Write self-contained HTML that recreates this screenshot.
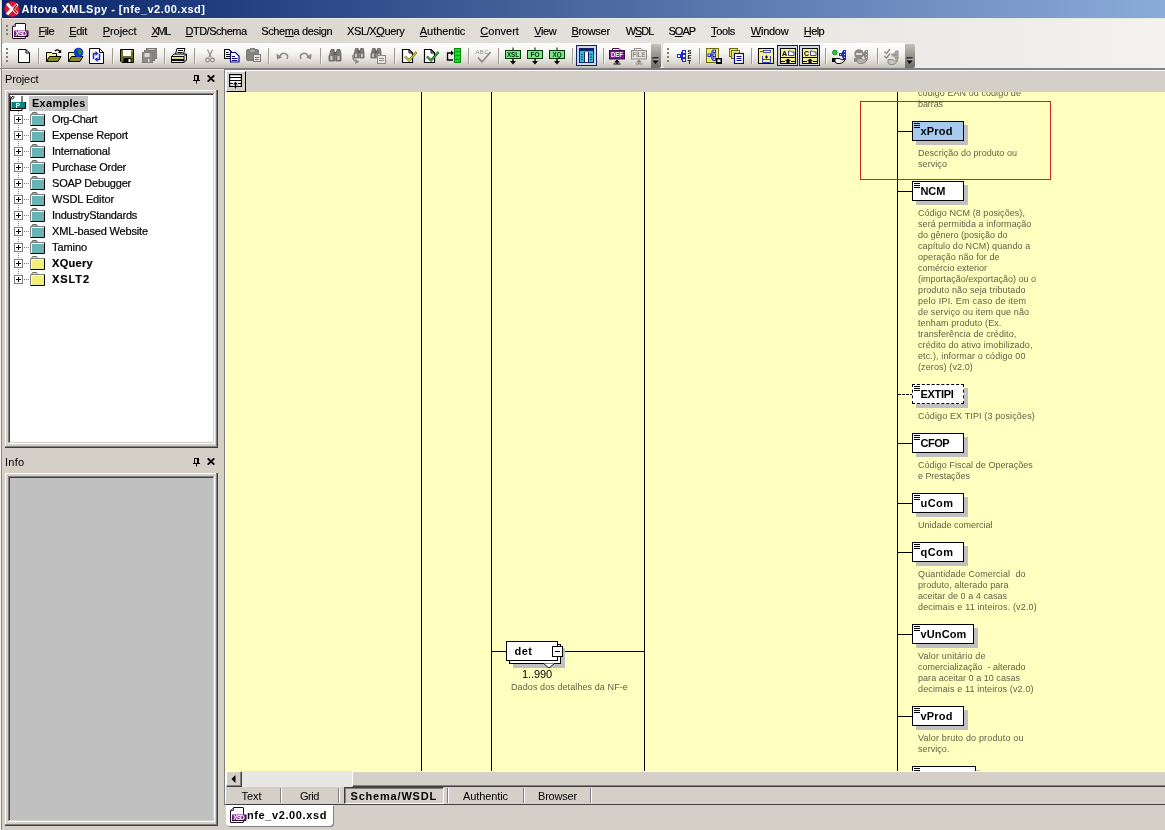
<!DOCTYPE html>
<html>
<head>
<meta charset="utf-8">
<title>Altova XMLSpy - [nfe_v2.00.xsd]</title>
<style>
html,body{margin:0;padding:0;}
body{will-change:transform;width:1165px;height:830px;overflow:hidden;background:#d4d0c8;position:relative;
 font-family:"Liberation Sans",sans-serif;font-size:11px;color:#000;}
div,span,i,b,svg{position:absolute;}
u{text-decoration:underline;}
#dock{left:0;top:18px;width:1165px;height:51px;background:linear-gradient(to right,#d4d0c8 0%,#f3f2ef 100%);}
#title{left:2px;top:0;width:1163px;height:18px;
 background:linear-gradient(to right,#0a246a 0%,#8aacd8 100%);}
#title .t{left:19.5px;top:3px;color:#fff;font-weight:bold;font-size:11px;line-height:13px;white-space:nowrap;}
.m{-webkit-text-stroke:0.15px #000;top:25px;line-height:13px;white-space:nowrap;font-size:11px;}
.tb{top:43px;height:25px;border-radius:3px 0 0 3px;background:linear-gradient(to bottom,#fdfdfc 0%,#f7f6f4 35%,#e4e1db 68%,#d2cec5 88%,#c2beb4 100%);}
.chev{top:44px;height:24px;width:10px;border-radius:0 2px 2px 0;background:linear-gradient(to bottom,#c4c1b9 0%,#96938d 50%,#6e6c68 100%);}
.sep{top:48px;width:1px;height:16px;background:#9d9a92;box-shadow:1px 0 0 #f4f3f0;}
.grip{width:2px;background:repeating-linear-gradient(to bottom,#807e78 0,#807e78 2px,transparent 2px,transparent 4px);}
.ph{left:5px;line-height:13px;white-space:nowrap;}
.tr{left:0;height:16px;width:200px;}
.tr .pm{left:5px;top:3px;width:9px;height:9px;box-sizing:border-box;border:1px solid #808080;background:#fff;}
.tr .pm:before{content:"";position:absolute;left:1px;top:3px;width:5px;height:1px;background:#000;}
.tr .pm:after{content:"";position:absolute;left:3px;top:1px;width:1px;height:5px;background:#000;}
.tr .dots{left:15px;top:7px;width:6px;height:1px;background:repeating-linear-gradient(to right,#808080 0,#808080 1px,transparent 1px,transparent 2px);}
.tr .tx{-webkit-text-stroke:0.2px #000;left:43px;top:1px;line-height:13px;white-space:nowrap;}
#diagram{left:226px;top:92px;width:939px;height:679px;background:#ffffc0;overflow:hidden;}
.vl{top:0;width:1px;height:679px;background:#000;}
.hl{height:1px;background:#000;}
.el{box-sizing:border-box;height:20px;border:1px solid #000;background:#fff;
 box-shadow:4px 4px 0 #c0c0c0;}
.el b{left:7.5px;top:3px;font-weight:bold;font-size:11px;line-height:13px;white-space:nowrap;}
.el:before{content:"";position:absolute;left:1px;top:1px;width:6px;height:1px;background:#000;box-shadow:0 2px 0 #000,0 4px 0 #000;}
.el.opt{border:1px dashed #000;}
.ann{color:#626248;font-size:9px;line-height:11px;white-space:pre;}
.tab{top:789.5px;line-height:13px;white-space:nowrap;font-size:11px;}
.tsep{top:788px;width:1px;height:15px;background:#808080;box-shadow:1px 0 0 #fff;}
</style>
</head>
<body>
<div id="title"><svg style="left:2px;top:1px" width="16" height="16" viewBox="0 0 16 16"><circle cx="8" cy="8" r="7.7" fill="#dc1432"/><path d="M12.8 4 L8.8 8 L12.8 12" stroke="#fff" stroke-width="2.8" fill="none" stroke-linecap="round" stroke-linejoin="round"/><path d="M12.6 4.3 L9.2 8 L12.6 11.7" stroke="#8c0a14" stroke-width="1.3" fill="none" stroke-linecap="round" stroke-linejoin="round"/><path d="M3.8 3.5 L8 8 L3.8 12.5" stroke="#fff" stroke-width="3" fill="none" stroke-linecap="round" stroke-linejoin="round"/></svg><span class="t" style="letter-spacing:0.47px">Altova XMLSpy - [nfe_v2.00.xsd]</span></div>
<div id="dock"></div><div style="left:2px;top:18px;width:1163px;height:1px;background:#ebe9e4"></div>
<div style="left:0;top:0;width:1px;height:830px;background:#f6f5f0"></div><div style="left:1px;top:18px;width:1px;height:812px;background:#8c8984"></div>
<div class="grip" style="left:6px;top:25px;height:10px"></div>
<svg style="left:12px;top:23px" width="17" height="17" viewBox="0 0 17 17"><path d="M0.5 3.5 L3.5 0.5 H13 Q13.5 0.5 13.5 1 V15 Q13.5 15.5 13 15.5 H1 Q0.5 15.5 0.5 15 Z" fill="#fff" stroke="#1e0a1e" stroke-width="1"/><path d="M0.5 3.5 H3.5 V0.5" fill="#c8b4d2" stroke="#1e0a1e" stroke-width="0.8"/><rect x="2" y="7.5" width="14" height="6" fill="#7a1e82"/><path d="M16 7.5 V13.5 H2" fill="none" stroke="#1e0a1e"/><text x="9" y="12.6" font-family="Liberation Sans,sans-serif" font-size="6.5" font-weight="bold" fill="#fff" text-anchor="middle" textLength="11.5">XSD</text></svg>
<span class="m" style="left:38.6px;letter-spacing:-0.58px"><u>F</u>ile</span><span class="m" style="left:69.2px;letter-spacing:-0.27px"><u>E</u>dit</span><span class="m" style="left:102.8px;letter-spacing:-0.09px"><u>P</u>roject</span><span class="m" style="left:151.4px;letter-spacing:-1.41px"><u>X</u>ML</span><span class="m" style="left:185.5px;letter-spacing:-0.50px"><u>D</u>TD/Schema</span><span class="m" style="left:261.2px;letter-spacing:-0.37px">Sche<u>m</u>a design</span><span class="m" style="left:347.0px;letter-spacing:-0.38px">XSL/X<u>Q</u>uery</span><span class="m" style="left:419.8px;letter-spacing:-0.04px"><u>A</u>uthentic</span><span class="m" style="left:480.3px;letter-spacing:0.01px"><u>C</u>onvert</span><span class="m" style="left:534.3px;letter-spacing:-0.41px"><u>V</u>iew</span><span class="m" style="left:571.4px;letter-spacing:-0.28px"><u>B</u>rowser</span><span class="m" style="left:625.8px;letter-spacing:-1.10px">W<u>S</u>DL</span><span class="m" style="left:668.4px;letter-spacing:-0.92px">S<u>O</u>AP</span><span class="m" style="left:711.0px;letter-spacing:-0.34px"><u>T</u>ools</span><span class="m" style="left:750.8px;letter-spacing:-0.25px"><u>W</u>indow</span><span class="m" style="left:803.8px;letter-spacing:-0.61px"><u>H</u>elp</span>
<div class="tb" style="left:2px;width:650px"></div><div class="chev" style="left:651px"></div><svg style="left:652px;top:57px" width="7" height="8" viewBox="0 0 7 8"><path d="M0.5 1 H6.5" stroke="#000" stroke-width="1.3"/><path d="M0.5 3.5 H6.5 L3.5 7 Z" fill="#000"/><path d="M1.5 2 H7.5" stroke="#fff" stroke-width="0.7" opacity="0.7"/></svg>
<div class="tb" style="left:663px;width:243px"></div><div class="chev" style="left:905px"></div><svg style="left:906px;top:57px" width="7" height="8" viewBox="0 0 7 8"><path d="M0.5 1 H6.5" stroke="#000" stroke-width="1.3"/><path d="M0.5 3.5 H6.5 L3.5 7 Z" fill="#000"/><path d="M1.5 2 H7.5" stroke="#fff" stroke-width="0.7" opacity="0.7"/></svg>
<div class="grip" style="left:6px;top:48px;height:14px"></div><div class="grip" style="left:667px;top:48px;height:14px"></div>
<div class="sep" style="left:38px"></div><div class="sep" style="left:112px"></div><div class="sep" style="left:164px"></div><div class="sep" style="left:194px"></div><div class="sep" style="left:268px"></div><div class="sep" style="left:320px"></div><div class="sep" style="left:394px"></div><div class="sep" style="left:468px"></div><div class="sep" style="left:498px"></div><div class="sep" style="left:572px"></div><div class="sep" style="left:603px"></div><div class="sep" style="left:699px"></div><div class="sep" style="left:751px"></div><div class="sep" style="left:825px"></div><div class="sep" style="left:877px"></div>
<svg style="left:18px;top:49px" width="12" height="14" viewBox="0 0 12 14"><path d="M0.5 0.5 H8 L11.5 4 V13.5 H0.5 Z" fill="#fff" stroke="#000"/><path d="M8 0.5 V4 H11.5" fill="none" stroke="#000"/></svg><svg style="left:46px;top:47px" width="16" height="16" viewBox="0 0 16 16"><path d="M0.5 14.5 V5.5 H5.5 L6.5 6.5 H10.5 V9.5" fill="#f6f296" stroke="#000"/><path d="M0.5 14.5 L3.5 9.5 H15 L12 14.5 Z" fill="#8c8c1e" stroke="#000"/><path d="M9 4 Q11.5 1.5 14 4.5" fill="none" stroke="#000" stroke-width="1.2"/><path d="M15.2 2.5 V6 H11.8 Z" fill="#000"/></svg><svg style="left:68px;top:47px" width="16" height="16" viewBox="0 0 16 16"><path d="M0.5 14.5 V5.5 H5.5 L6.5 6.5 H10.5 V9.5" fill="#f6f296" stroke="#000"/><path d="M0.5 14.5 L3.5 9.5 H15 L12 14.5 Z" fill="#8c8c1e" stroke="#000"/><circle cx="10.5" cy="5.5" r="4.8" fill="#1436c8"/><path d="M8.5 2 q2 0.5 1.5 2.5 t1.5 3.5 q2.5-1 2.5-4 q-1.5-1-2.5-2 z M6.5 5 q1 1 0.5 3 q-1-1-0.5-3z" fill="#1e8c3c"/></svg><svg style="left:89px;top:48px" width="15" height="16" viewBox="0 0 15 16"><path d="M0.5 0.5 H10.5 L14.5 4.5 V15.5 H0.5 Z" fill="#fff" stroke="#000"/><path d="M10.5 0.5 V4.5 H14.5" fill="none" stroke="#000"/><path d="M7 5.5 H4.5 V11" fill="none" stroke="#1e28d2" stroke-width="1.6"/><path d="M6.5 3 L9.5 5.5 L6.5 8 Z" fill="#1e28d2"/><path d="M8 11.5 H10.5 V6" fill="none" stroke="#1e28d2" stroke-width="1.6"/><path d="M8.5 9 L5.5 11.5 L8.5 14 Z" fill="#1e28d2"/></svg><svg style="left:120px;top:49px" width="14" height="14" viewBox="0 0 14 14"><path d="M0.5 0.5 H13.5 V13.5 H2 L0.5 12 Z" fill="#6e6e1e" stroke="#000"/><rect x="3" y="1" width="8" height="6" fill="#fff"/><rect x="11.5" y="1.5" width="1" height="1" fill="#fff"/><rect x="3.5" y="9" width="8" height="4.5" fill="#000"/><rect x="8.5" y="10" width="2" height="3" fill="#fff"/></svg><svg style="left:142px;top:48px" width="16" height="15" viewBox="0 0 16 15"><rect x="4.5" y="0.5" width="10" height="10" fill="#8e8c88" stroke="#7c7a76"/><rect x="6.5" y="1" width="6" height="3" fill="#c8c6c2"/><rect x="2.5" y="2.5" width="10" height="10" fill="#8e8c88" stroke="#7c7a76"/><rect x="0.5" y="4.5" width="10" height="10" fill="#8e8c88" stroke="#7c7a76"/><rect x="2.5" y="5" width="5" height="4" fill="#dcdad6"/><rect x="6" y="11" width="1.5" height="3" fill="#dcdad6"/></svg><svg style="left:171px;top:48px" width="17" height="16" viewBox="0 0 17 16"><path d="M4.5 6 L6 0.5 H14 L12.5 6" fill="#fff" stroke="#000"/><path d="M7 2.5 H12 M6.5 4.5 H11.5" stroke="#000"/><path d="M0.5 8.5 L3 6 H15.5 V12 L13 14.5 H0.5 Z" fill="#e8e6e0" stroke="#000"/><path d="M0.5 8.5 H13 V14.5 M13 8.5 L15.5 6" fill="none" stroke="#000"/><rect x="1" y="11" width="12" height="2" fill="#000"/><rect x="2" y="9.5" width="9" height="1.5" fill="#d8d850"/></svg>
<svg style="left:205px;top:49px" width="10" height="14" viewBox="0 0 10 14"><path d="M2.5 0.5 L6.3 8.5 M7.5 0.5 L3.7 8.5" stroke="#8c8a84" stroke-width="1.100" fill="none"/><circle cx="2.5" cy="11" r="1.9" fill="none" stroke="#8c8a84" stroke-width="1.100"/><circle cx="7.5" cy="11" r="1.9" fill="none" stroke="#8c8a84" stroke-width="1.100"/></svg><svg style="left:224px;top:49px" width="16" height="14" viewBox="0 0 16 14"><path d="M0.5 0.5 H5 L7.5 3 V9.5 H0.5 Z" fill="#fff" stroke="#000" stroke-width="1.2"/><path d="M2 3.5 H4.5 M2 5.5 H6 M2 7.5 H6" stroke="#000"/><path d="M6.5 3.5 H11.5 L15 7 V13 H6.5 Z" fill="#fff" stroke="#0a0a82" stroke-width="1.2"/><path d="M8 7.5 H11 M8 9.5 H13.5 M8 11.5 H13.5" stroke="#0a0a82"/></svg><svg style="left:246px;top:48px" width="15" height="14" viewBox="0 0 15 14"><rect x="0.5" y="1.5" width="12" height="11" rx="1.5" fill="#868480" stroke="#7c7a76"/><rect x="4" y="0" width="5" height="3" fill="#868480"/><rect x="4.5" y="2.5" width="4" height="1" fill="#dcdad6"/><rect x="7.5" y="6.5" width="7" height="7" fill="#e4e2de" stroke="#7c7a76"/><path d="M9 9.5 H13 M9 11.5 H13" stroke="#7c7a76"/></svg><svg style="left:276px;top:51px" width="14" height="10" viewBox="0 0 14 10"><g><path d="M3.5 6 Q5.5 1.5 9 2.5 Q13 4 11 8" fill="none" stroke="#8c8a84" stroke-width="1.5"/><path d="M0.5 2.5 L6 6.5 L1 8.5 Z" fill="#8c8a84"/></g></svg><svg style="left:298px;top:51px" width="14" height="10" viewBox="0 0 14 10"><g transform="translate(14,0) scale(-1,1)"><path d="M3.5 6 Q5.5 1.5 9 2.5 Q13 4 11 8" fill="none" stroke="#8c8a84" stroke-width="1.5"/><path d="M0.5 2.5 L6 6.5 L1 8.5 Z" fill="#8c8a84"/></g></svg><svg style="left:328px;top:48px" width="16" height="17" viewBox="0 0 16 17"><path d="M2 6 L3 1.5 H6 L7 6 V13 H1 V8 Z M8 6 L9 1.5 H12 L13 6 V13 H8 Z" fill="#7e7c76" stroke="#5e5c58" stroke-width="0.8"/><rect x="5.5" y="4" width="3" height="3" fill="#5e5c58"/><rect x="2.5" y="8" width="2" height="4" fill="#d4d0c8"/><rect x="9.5" y="8" width="2" height="4" fill="#d4d0c8"/></svg><svg style="left:350px;top:48px" width="16" height="17" viewBox="0 0 16 17"><g transform="translate(3,-1) scale(0.85)"><path d="M2 6 L3 1.5 H6 L7 6 V13 H1 V8 Z M8 6 L9 1.5 H12 L13 6 V13 H8 Z" fill="#7e7c76" stroke="#5e5c58" stroke-width="0.8"/><rect x="5.5" y="4" width="3" height="3" fill="#5e5c58"/><rect x="2.5" y="8" width="2" height="4" fill="#d4d0c8"/><rect x="9.5" y="8" width="2" height="4" fill="#d4d0c8"/></g><path d="M3 7 Q2 13 7 13.5" fill="none" stroke="#8c8a84" stroke-width="1.5"/><path d="M5.5 11 L9.5 14 L5 16 Z" fill="#8c8a84"/></svg><svg style="left:370px;top:48px" width="16" height="17" viewBox="0 0 16 17"><g transform="translate(0,-1) scale(0.85)"><path d="M2 6 L3 1.5 H6 L7 6 V13 H1 V8 Z M8 6 L9 1.5 H12 L13 6 V13 H8 Z" fill="#7e7c76" stroke="#5e5c58" stroke-width="0.8"/><rect x="5.5" y="4" width="3" height="3" fill="#5e5c58"/><rect x="2.5" y="8" width="2" height="4" fill="#d4d0c8"/><rect x="9.5" y="8" width="2" height="4" fill="#d4d0c8"/></g><rect x="7.5" y="7.5" width="8" height="8" fill="#e8e6e2" stroke="#8c8a84"/><path d="M9 10.5 H14 M9 12.5 H14" stroke="#8c8a84"/></svg>
<svg style="left:401px;top:49px" width="17" height="14" viewBox="0 0 17 14"><path d="M1.5 0.5 H8 L11.5 4 V13.5 H1.5 Z" fill="#fff" stroke="#000" stroke-width="1.2"/><path d="M8 0.5 V4 H11.5" fill="none" stroke="#000"/><path d="M4 7.5 L8 11.5 L15.5 3" fill="none" stroke="#28280a" stroke-width="2.2"/><path d="M4 7.5 L8 11.5 L15.5 3" fill="none" stroke="#e6dc28" stroke-width="1.2"/></svg><svg style="left:423px;top:49px" width="17" height="14" viewBox="0 0 17 14"><path d="M1.5 0.5 H8 L11.5 4 V13.5 H1.5 Z" fill="#fff" stroke="#000" stroke-width="1.2"/><path d="M8 0.5 V4 H11.5" fill="none" stroke="#000"/><path d="M4 7.5 L8 11.5 L15.5 3" fill="none" stroke="#28280a" stroke-width="2.2"/><path d="M4 7.5 L8 11.5 L15.5 3" fill="none" stroke="#28b43c" stroke-width="1.2"/></svg><svg style="left:446px;top:48px" width="16" height="15" viewBox="0 0 16 15"><rect x="8.5" y="0.5" width="6" height="14" fill="#14dc28" stroke="#0a8c14"/><path d="M9.5 3.5 H13.5 M9.5 7.5 H13.5 M9.5 11.5 H13.5" stroke="#0a8c14"/><path d="M6 5 H1.5 V12 H7" fill="none" stroke="#000" stroke-width="1.3"/><path d="M5 2.5 L8 5 L5 7.5 Z" fill="#000"/></svg><svg style="left:475px;top:48px" width="17" height="16" viewBox="0 0 17 16"><text x="0.5" y="5.5" font-family="Liberation Sans,sans-serif" font-size="6" fill="#8c8a84" textLength="13">ABC</text><path d="M3 9.5 L7 14 L15.5 4" fill="none" stroke="#8c8a84" stroke-width="1.7"/></svg><svg style="left:505px;top:46px" width="16" height="20" viewBox="0 0 16 20"><path d="M8 1.5 V4" stroke="#000"/><rect x="0.5" y="4.5" width="15" height="8" fill="#78e68c" stroke="#003c00"/><text x="8" y="11.3" font-family="Liberation Sans,sans-serif" font-size="7.5" font-weight="bold" fill="#002800" text-anchor="middle" textLength="12" lengthAdjust="spacingAndGlyphs">XSL</text><path d="M8 13 V16" stroke="#000" stroke-width="1.4"/><path d="M5 15 H11 L8 18.5 Z" fill="#000"/></svg><svg style="left:527px;top:46px" width="16" height="20" viewBox="0 0 16 20"><path d="M8 1.5 V4" stroke="#000"/><rect x="0.5" y="4.5" width="15" height="8" fill="#78e68c" stroke="#003c00"/><text x="8" y="11.3" font-family="Liberation Sans,sans-serif" font-size="7.5" font-weight="bold" fill="#002800" text-anchor="middle" textLength="9" lengthAdjust="spacingAndGlyphs">FO</text><path d="M8 13 V16" stroke="#000" stroke-width="1.4"/><path d="M5 15 H11 L8 18.5 Z" fill="#000"/></svg><svg style="left:549px;top:46px" width="16" height="20" viewBox="0 0 16 20"><path d="M8 1.5 V4" stroke="#000"/><rect x="0.5" y="4.5" width="15" height="8" fill="#78e68c" stroke="#003c00"/><text x="8" y="11.3" font-family="Liberation Sans,sans-serif" font-size="7.5" font-weight="bold" fill="#002800" text-anchor="middle" textLength="9" lengthAdjust="spacingAndGlyphs">XQ</text><path d="M8 13 V16" stroke="#000" stroke-width="1.4"/><path d="M5 15 H11 L8 18.5 Z" fill="#000"/></svg>
<div style="left:576px;top:45px;width:21px;height:21px;box-sizing:border-box;border:1px solid #0a246a;background:#d2d7e8"></div><svg style="left:579px;top:48px" width="15" height="15" viewBox="0 0 15 15"><rect x="0.5" y="0.5" width="14" height="14" fill="#fff" stroke="#0a246a"/><rect x="1" y="1" width="13" height="2.5" fill="#0a246a"/><rect x="1" y="4" width="4" height="10" fill="#32bed2"/><rect x="10" y="4" width="4" height="10" fill="#32bed2"/><path d="M5.5 4 V14 M9.5 4 V14" stroke="#0a246a"/><path d="M2 6.5 H4 M2 9 H4 M2 11.5 H4 M11 6.5 H13 M11 9 H13 M11 11.5 H13" stroke="#0a246a" stroke-width="0.8"/></svg><svg style="left:609px;top:46px" width="17" height="20" viewBox="0 0 17 20"><path d="M3.5 5 V2.5 H10 L12.5 5" fill="#fff" stroke="#3c0a46"/><rect x="0.5" y="4.5" width="15" height="8.5" fill="#78148c" stroke="#3c0a46"/><text x="8" y="11.3" font-family="Liberation Sans,sans-serif" font-size="7.5" font-weight="bold" fill="#fff" text-anchor="middle" textLength="12" lengthAdjust="spacingAndGlyphs">DEF</text><path d="M8 14 V18" stroke="#000" stroke-width="1.3"/><path d="M5 16.5 L8 13.5 L11 16.5 Z" fill="#000"/><path d="M4.5 18 H11.5" stroke="#000"/></svg><svg style="left:631px;top:46px" width="17" height="20" viewBox="0 0 17 20"><path d="M3.5 5 V2.5 H10 L12.5 5" fill="#fff" stroke="#8c8a84"/><rect x="0.5" y="4.5" width="15" height="8.5" fill="#e4e2de" stroke="#8c8a84"/><text x="8" y="11.3" font-family="Liberation Sans,sans-serif" font-size="7.5" font-weight="bold" fill="#8c8a84" text-anchor="middle" textLength="13" lengthAdjust="spacingAndGlyphs">FILE</text><path d="M8 14 V18" stroke="#8c8a84" stroke-width="1.3"/><path d="M5 16.5 L8 13.5 L11 16.5 Z" fill="#8c8a84"/><path d="M4.5 18 H11.5" stroke="#8c8a84"/></svg>
<svg style="left:677px;top:48px" width="16" height="17" viewBox="0 0 16 17"><g fill="#fff" stroke="#1e28d2"><rect x="0.5" y="6.5" width="3" height="3"/><rect x="5.5" y="2.5" width="3" height="3"/><rect x="5.5" y="6.5" width="3" height="3"/><rect x="5.5" y="10.5" width="3" height="3"/></g><path d="M3.5 8 H5.5 M4.5 4 V12 M4.5 4 H5.5 M4.5 12 H5.5" stroke="#1e28d2" fill="none"/><text x="10.5" y="5.5" font-family="Liberation Sans,sans-serif" font-size="6" font-weight="bold">S</text><text x="10.5" y="10.8" font-family="Liberation Sans,sans-serif" font-size="6" font-weight="bold">E</text><text x="10.5" y="16.2" font-family="Liberation Sans,sans-serif" font-size="6" font-weight="bold">T</text></svg><svg style="left:706px;top:48px" width="17" height="17" viewBox="0 0 17 17"><rect x="0.5" y="0.5" width="12" height="14" fill="#f0ec78" stroke="#6e6e14"/><g fill="#fff" stroke="#1e28d2"><rect x="2" y="6" width="2.5" height="2.5"/><rect x="7" y="2" width="2.5" height="2.5"/><rect x="7" y="6" width="2.5" height="2.5"/><rect x="7" y="10" width="2.5" height="2.5"/></g><path d="M4.5 7.2 H7 M5.8 3.2 V11.2 M5.8 3.2 H7 M5.8 11.2 H7" stroke="#1e28d2" fill="none"/><rect x="10" y="10" width="6" height="6" fill="#000"/><rect x="11.5" y="11.5" width="3" height="2.5" fill="#fff"/></svg><svg style="left:729px;top:48px" width="15" height="16" viewBox="0 0 15 16"><rect x="0.5" y="0.5" width="8" height="8" fill="#e6e26e" stroke="#6e6e14"/><rect x="2.5" y="2.5" width="8" height="8" fill="#e6e26e" stroke="#6e6e14"/><rect x="5.5" y="5.5" width="9" height="10" fill="#fff" stroke="#0a0a82" stroke-width="1.2"/><path d="M7.5 8.5 H12.5 M7.5 10.5 H12.5 M7.5 12.5 H12.5" stroke="#0a0a82"/></svg><svg style="left:758px;top:48px" width="16" height="16" viewBox="0 0 16 16"><rect x="0.5" y="0.5" width="15" height="15" fill="#f6f28c" stroke="#000"/><rect x="5.5" y="2.5" width="7" height="2" fill="#fff" stroke="#1e28d2" stroke-width="0.8"/><path d="M2 3.5 H5.5" stroke="#1e28d2" stroke-width="0.8"/><path d="M4.5 8 V14.5 H12.5 V8 M4.5 11.5 H12.5" stroke="#1e28d2" stroke-width="0.9" fill="none"/><path d="M7 9 H10 M8.5 7.5 V10.5" stroke="#000"/></svg><div style="left:777px;top:45px;width:21px;height:21px;box-sizing:border-box;border:1px solid #0a246a;background:#d2d7e8"></div><svg style="left:780px;top:48px" width="16" height="16" viewBox="0 0 16 16"><rect x="0.5" y="0.5" width="15" height="15" fill="#f6f28c" stroke="#000"/><text x="2" y="7.5" font-family="Liberation Sans,sans-serif" font-size="7" font-weight="bold">A</text><path d="M8.5 3 H10.5 L11.5 4 H14 V7.5 H8.5 Z" fill="#fff" stroke="#1e28d2" stroke-width="0.9"/><path d="M1 9.5 H15 M1 13.5 H5 M11 13.5 H15" stroke="#000"/><path d="M8 10.5 L11 13 H9.5 V15 H6.5 V13 H5 Z" fill="#000"/></svg><div style="left:799px;top:45px;width:21px;height:21px;box-sizing:border-box;border:1px solid #0a246a;background:#d2d7e8"></div><svg style="left:802px;top:48px" width="16" height="16" viewBox="0 0 16 16"><rect x="0.5" y="0.5" width="15" height="15" fill="#f6f28c" stroke="#000"/><text x="2" y="7.5" font-family="Liberation Sans,sans-serif" font-size="7" font-weight="bold">C</text><path d="M8.5 3 H10.5 L11.5 4 H14 V7.5 H8.5 Z" fill="#fff" stroke="#1e28d2" stroke-width="0.9"/><path d="M1 9.5 H15 M1 13.5 H5 M11 13.5 H15" stroke="#000"/><path d="M8 10.5 L11 13 H9.5 V15 H6.5 V13 H5 Z" fill="#000"/></svg><svg style="left:832px;top:49px" width="15" height="15" viewBox="0 0 15 15"><g fill="#fff" stroke="#1e28d2"><rect x="7.5" y="4.5" width="2" height="2"/><rect x="11.5" y="1.5" width="2" height="2"/><rect x="11.5" y="4.5" width="2" height="2"/><rect x="11.5" y="7.5" width="2" height="2"/></g><path d="M9.5 5.5 H11.5 M10.5 2.5 V8.5 M10.5 2.5 H11.5 M10.5 8.5 H11.5" stroke="#1e28d2" fill="none"/><path d="M3 9.5 H7 Q8.5 9.5 9.5 11 L13.5 10 Q11.5 14.5 8 14.5 H5 L3 13 Z" fill="#fff" stroke="#000"/><rect x="0" y="9" width="3" height="4" fill="#000"/><circle cx="2.8" cy="3.5" r="2.3" fill="#1ed23c" stroke="#0a6e14" stroke-width="0.8"/></svg><svg style="left:854px;top:49px" width="15" height="15" viewBox="0 0 15 15"><g fill="#fff" stroke="#8c8a84"><rect x="7.5" y="4.5" width="2" height="2"/><rect x="11.5" y="1.5" width="2" height="2"/><rect x="11.5" y="4.5" width="2" height="2"/><rect x="11.5" y="7.5" width="2" height="2"/></g><path d="M9.5 5.5 H11.5 M10.5 2.5 V8.5 M10.5 2.5 H11.5 M10.5 8.5 H11.5" stroke="#8c8a84" fill="none"/><path d="M3 9.5 H7 Q8.5 9.5 9.5 11 L13.5 10 Q11.5 14.5 8 14.5 H5 L3 13 Z" fill="#b4b2ac" stroke="#8c8a84"/><rect x="0" y="9" width="3" height="4" fill="#8c8a84"/><circle cx="5" cy="5" r="4.8" fill="#8c8a84"/><rect x="2" y="4" width="6" height="2" fill="#dcdad6"/></svg><svg style="left:884px;top:48px" width="15" height="17" viewBox="0 0 15 17"><path d="M0.5 3.5 L2.5 5.5 L6 1 M0.5 8 L2.5 10 L6 5.5" fill="none" stroke="#8c8a84" stroke-width="1.4"/><g fill="#e4e2de" stroke="#8c8a84"><rect x="8" y="6" width="2" height="2"/><rect x="12" y="3" width="2" height="2"/><rect x="12" y="6" width="2" height="2"/><rect x="12" y="9" width="2" height="2"/></g><path d="M10 7 H12 M11 4 V10 M11 4 H12 M11 10 H12" stroke="#8c8a84" fill="none"/><path d="M4 11.5 H8 Q9.5 11.5 10.5 13 L14 12 Q12 16.5 9 16.5 H6 L4 15 Z" fill="#c4c2bc" stroke="#8c8a84"/></svg>
<div style="left:0;top:68px;width:1165px;height:1px;background:#808080"></div><div style="left:2px;top:69px;width:222px;height:1px;background:#efeeea"></div>
<span class="ph" style="top:73px;letter-spacing:-0.11px">Project</span><svg style="left:193px;top:75px" width="7" height="9" viewBox="0 0 7 9"><path d="M1 0.5 H6 M1.5 0 V5 M0 5.5 H7 M3.5 6 V8.5" stroke="#000" fill="none"/><path d="M5 0 V5" stroke="#000" stroke-width="2"/></svg><svg style="left:207px;top:75px" width="8" height="7" viewBox="0 0 8 7"><path d="M0.7 0.3 L7.3 6.7 M7.3 0.3 L0.7 6.7" stroke="#000" stroke-width="1.8"/></svg>
<span class="ph" style="top:456px;letter-spacing:0.29px">Info</span><svg style="left:193px;top:458px" width="7" height="9" viewBox="0 0 7 9"><path d="M1 0.5 H6 M1.5 0 V5 M0 5.5 H7 M3.5 6 V8.5" stroke="#000" fill="none"/><path d="M5 0 V5" stroke="#000" stroke-width="2"/></svg><svg style="left:207px;top:458px" width="8" height="7" viewBox="0 0 8 7"><path d="M0.7 0.3 L7.3 6.7 M7.3 0.3 L0.7 6.7" stroke="#000" stroke-width="1.8"/></svg>
<div style="left:5px;top:90px;width:213px;height:358px;background:#404040"></div><div style="left:5px;top:90px;width:212px;height:357px;background:#808080"></div><div style="left:5px;top:90px;width:211px;height:356px;background:#fff"></div><div style="left:6px;top:91px;width:210px;height:355px;background:#d4d0c8"></div><div style="left:8px;top:93px;width:207px;height:351px;background:#fff"></div><div style="left:8px;top:93px;width:206px;height:350px;background:#808080"></div><div style="left:9px;top:94px;width:205px;height:349px;background:#d4d0c8"></div><div style="left:9px;top:94px;width:204px;height:348px;background:#404040"></div><div style="left:10px;top:95px;width:203px;height:347px;background:#fff"></div>
<div style="left:5px;top:473px;width:213px;height:353px;background:#404040"></div><div style="left:5px;top:473px;width:212px;height:352px;background:#808080"></div><div style="left:5px;top:473px;width:211px;height:351px;background:#fff"></div><div style="left:6px;top:474px;width:210px;height:350px;background:#d4d0c8"></div><div style="left:8px;top:476px;width:207px;height:346px;background:#fff"></div><div style="left:8px;top:476px;width:206px;height:345px;background:#808080"></div><div style="left:9px;top:477px;width:205px;height:344px;background:#d4d0c8"></div><div style="left:9px;top:477px;width:204px;height:343px;background:#404040"></div><div style="left:10px;top:478px;width:203px;height:342px;background:#c0c0c0"></div>
<div id="tree" style="left:9px;top:96px;width:204px;height:347px;overflow:hidden"><svg style="left:1px;top:-1px" width="17" height="17" viewBox="0 0 17 17"><rect x="0.5" y="0.5" width="11.5" height="15" fill="#fff" stroke="#000"/><rect x="1.5" y="7" width="14" height="6.5" fill="#0a8282"/><path d="M15.5 7 V13.5 H1.5" fill="none" stroke="#000"/><text x="8" y="12.8" font-family="Liberation Sans,sans-serif" font-size="6.5" font-weight="bold" fill="#fff" text-anchor="middle">P</text><circle cx="2" cy="2" r="2" fill="#fff" stroke="#000" stroke-width="0.8"/><path d="M1 3 L3 1" stroke="#000"/></svg><div style="left:20px;top:0;width:59px;height:15px;background:#c6c6c6"></div><span style="left:23px;top:1px;line-height:13px;font-weight:bold;white-space:nowrap;letter-spacing:0.27px">Examples</span><div style="left:9px;top:15px;width:1px;height:171px;background:repeating-linear-gradient(to bottom,#808080 0,#808080 1px,transparent 1px,transparent 2px)"></div><div class="tr" style="top:16px"><div class="pm"></div><div class="dots"></div><svg style="left:21px;top:0px" width="16" height="15" viewBox="0 0 16 15"><path d="M1.5 2.5 L2.5 0.5 H6.5 L7.5 2.5" fill="#66b4b4" stroke="#6e6e6e"/><rect x="0.5" y="2.5" width="14" height="11" fill="#66b4b4"/><path d="M1.5 13 V3.5 H14" fill="none" stroke="#e6ffff"/><path d="M0.5 13.5 V2.5 H14.5" fill="none" stroke="#808080"/><path d="M14.5 2.5 V13.5 H0.5" fill="none" stroke="#000"/></svg><span class="tx" style="letter-spacing:-0.43px">Org-Chart</span></div><div class="tr" style="top:32px"><div class="pm"></div><div class="dots"></div><svg style="left:21px;top:0px" width="16" height="15" viewBox="0 0 16 15"><path d="M1.5 2.5 L2.5 0.5 H6.5 L7.5 2.5" fill="#66b4b4" stroke="#6e6e6e"/><rect x="0.5" y="2.5" width="14" height="11" fill="#66b4b4"/><path d="M1.5 13 V3.5 H14" fill="none" stroke="#e6ffff"/><path d="M0.5 13.5 V2.5 H14.5" fill="none" stroke="#808080"/><path d="M14.5 2.5 V13.5 H0.5" fill="none" stroke="#000"/></svg><span class="tx" style="letter-spacing:-0.21px">Expense Report</span></div><div class="tr" style="top:48px"><div class="pm"></div><div class="dots"></div><svg style="left:21px;top:0px" width="16" height="15" viewBox="0 0 16 15"><path d="M1.5 2.5 L2.5 0.5 H6.5 L7.5 2.5" fill="#66b4b4" stroke="#6e6e6e"/><rect x="0.5" y="2.5" width="14" height="11" fill="#66b4b4"/><path d="M1.5 13 V3.5 H14" fill="none" stroke="#e6ffff"/><path d="M0.5 13.5 V2.5 H14.5" fill="none" stroke="#808080"/><path d="M14.5 2.5 V13.5 H0.5" fill="none" stroke="#000"/></svg><span class="tx" style="letter-spacing:-0.20px">International</span></div><div class="tr" style="top:64px"><div class="pm"></div><div class="dots"></div><svg style="left:21px;top:0px" width="16" height="15" viewBox="0 0 16 15"><path d="M1.5 2.5 L2.5 0.5 H6.5 L7.5 2.5" fill="#66b4b4" stroke="#6e6e6e"/><rect x="0.5" y="2.5" width="14" height="11" fill="#66b4b4"/><path d="M1.5 13 V3.5 H14" fill="none" stroke="#e6ffff"/><path d="M0.5 13.5 V2.5 H14.5" fill="none" stroke="#808080"/><path d="M14.5 2.5 V13.5 H0.5" fill="none" stroke="#000"/></svg><span class="tx" style="letter-spacing:-0.26px">Purchase Order</span></div><div class="tr" style="top:80px"><div class="pm"></div><div class="dots"></div><svg style="left:21px;top:0px" width="16" height="15" viewBox="0 0 16 15"><path d="M1.5 2.5 L2.5 0.5 H6.5 L7.5 2.5" fill="#66b4b4" stroke="#6e6e6e"/><rect x="0.5" y="2.5" width="14" height="11" fill="#66b4b4"/><path d="M1.5 13 V3.5 H14" fill="none" stroke="#e6ffff"/><path d="M0.5 13.5 V2.5 H14.5" fill="none" stroke="#808080"/><path d="M14.5 2.5 V13.5 H0.5" fill="none" stroke="#000"/></svg><span class="tx" style="letter-spacing:-0.21px">SOAP Debugger</span></div><div class="tr" style="top:96px"><div class="pm"></div><div class="dots"></div><svg style="left:21px;top:0px" width="16" height="15" viewBox="0 0 16 15"><path d="M1.5 2.5 L2.5 0.5 H6.5 L7.5 2.5" fill="#66b4b4" stroke="#6e6e6e"/><rect x="0.5" y="2.5" width="14" height="11" fill="#66b4b4"/><path d="M1.5 13 V3.5 H14" fill="none" stroke="#e6ffff"/><path d="M0.5 13.5 V2.5 H14.5" fill="none" stroke="#808080"/><path d="M14.5 2.5 V13.5 H0.5" fill="none" stroke="#000"/></svg><span class="tx" style="letter-spacing:-0.11px">WSDL Editor</span></div><div class="tr" style="top:112px"><div class="pm"></div><div class="dots"></div><svg style="left:21px;top:0px" width="16" height="15" viewBox="0 0 16 15"><path d="M1.5 2.5 L2.5 0.5 H6.5 L7.5 2.5" fill="#66b4b4" stroke="#6e6e6e"/><rect x="0.5" y="2.5" width="14" height="11" fill="#66b4b4"/><path d="M1.5 13 V3.5 H14" fill="none" stroke="#e6ffff"/><path d="M0.5 13.5 V2.5 H14.5" fill="none" stroke="#808080"/><path d="M14.5 2.5 V13.5 H0.5" fill="none" stroke="#000"/></svg><span class="tx" style="letter-spacing:-0.25px">IndustryStandards</span></div><div class="tr" style="top:128px"><div class="pm"></div><div class="dots"></div><svg style="left:21px;top:0px" width="16" height="15" viewBox="0 0 16 15"><path d="M1.5 2.5 L2.5 0.5 H6.5 L7.5 2.5" fill="#66b4b4" stroke="#6e6e6e"/><rect x="0.5" y="2.5" width="14" height="11" fill="#66b4b4"/><path d="M1.5 13 V3.5 H14" fill="none" stroke="#e6ffff"/><path d="M0.5 13.5 V2.5 H14.5" fill="none" stroke="#808080"/><path d="M14.5 2.5 V13.5 H0.5" fill="none" stroke="#000"/></svg><span class="tx" style="letter-spacing:-0.17px">XML-based Website</span></div><div class="tr" style="top:144px"><div class="pm"></div><div class="dots"></div><svg style="left:21px;top:0px" width="16" height="15" viewBox="0 0 16 15"><path d="M1.5 2.5 L2.5 0.5 H6.5 L7.5 2.5" fill="#66b4b4" stroke="#6e6e6e"/><rect x="0.5" y="2.5" width="14" height="11" fill="#66b4b4"/><path d="M1.5 13 V3.5 H14" fill="none" stroke="#e6ffff"/><path d="M0.5 13.5 V2.5 H14.5" fill="none" stroke="#808080"/><path d="M14.5 2.5 V13.5 H0.5" fill="none" stroke="#000"/></svg><span class="tx" style="letter-spacing:-0.08px">Tamino</span></div><div class="tr" style="top:160px"><div class="pm"></div><div class="dots"></div><svg style="left:21px;top:0px" width="16" height="15" viewBox="0 0 16 15"><path d="M1.5 2.5 L2.5 0.5 H6.5 L7.5 2.5" fill="#f0f078" stroke="#6e6e6e"/><rect x="0.5" y="2.5" width="14" height="11" fill="#f0f078"/><path d="M1.5 13 V3.5 H14" fill="none" stroke="#ffffe0"/><path d="M0.5 13.5 V2.5 H14.5" fill="none" stroke="#808080"/><path d="M14.5 2.5 V13.5 H0.5" fill="none" stroke="#000"/></svg><span class="tx" style="font-weight:bold;letter-spacing:0.31px">XQuery</span></div><div class="tr" style="top:176px"><div class="pm"></div><div class="dots"></div><svg style="left:21px;top:0px" width="16" height="15" viewBox="0 0 16 15"><path d="M1.5 2.5 L2.5 0.5 H6.5 L7.5 2.5" fill="#f0f078" stroke="#6e6e6e"/><rect x="0.5" y="2.5" width="14" height="11" fill="#f0f078"/><path d="M1.5 13 V3.5 H14" fill="none" stroke="#ffffe0"/><path d="M0.5 13.5 V2.5 H14.5" fill="none" stroke="#808080"/><path d="M14.5 2.5 V13.5 H0.5" fill="none" stroke="#000"/></svg><span class="tx" style="font-weight:bold;letter-spacing:0.92px">XSLT2</span></div></div>
<div style="left:224px;top:69px;width:1px;height:736px;background:#808080"></div><div style="left:224px;top:69px;width:941px;height:1px;background:#808080"></div><div style="left:225px;top:70px;width:940px;height:1px;background:#fff"></div><div style="left:225px;top:70px;width:1px;height:735px;background:#fff"></div>
<div style="left:226px;top:71px;width:20px;height:21px;box-sizing:border-box;border-style:solid;border-width:1px;border-color:#fff #000 #000 #fff;background:#d4d0c8"></div><svg style="left:229px;top:74px" width="13" height="15" viewBox="0 0 13 15"><rect x="0.6" y="0.6" width="11.8" height="11.8" fill="#fff" stroke="#000" stroke-width="1.2"/><path d="M1 3.5 H12 M1 6.5 H12 M1 9.5 H4 M9 9.5 H12" stroke="#000"/><path d="M6.5 9 V14.5" stroke="#000" stroke-width="1.2"/><path d="M4 10.5 L6.5 7.5 L9 10.5 Z" fill="#000"/></svg>
<div id="diagram"><div class="vl" style="left:195px"></div><div class="vl" style="left:265px"></div><div class="vl" style="left:418px"></div><div class="vl" style="left:671px"></div><div class="hl" style="left:265px;top:559px;width:15px"></div><div class="hl" style="left:337px;top:559px;width:82px"></div><div class="el" style="left:283px;top:552px;width:52px;box-shadow:4px 4px 0 #c0c0c0"></div><div style="left:280px;top:549px;width:52px;height:20px;box-sizing:border-box;border:1px solid #000;background:#fff"><b style="left:7.5px;top:3px;font-size:11px;line-height:13px;letter-spacing:0.50px">det</b></div><svg style="left:317px;top:571px" width="13" height="6" viewBox="0 0 13 6"><path d="M0.5 0.5 L6 5 L11.5 0.5" fill="#fff" stroke="#000" stroke-width="0.9"/></svg><div style="left:326px;top:554px;width:11px;height:11px;box-sizing:border-box;border:1px solid #000;background:#fff"><div style="left:2px;top:4px;width:5px;height:1px;background:#000"></div></div><span style="left:296px;top:576px;font-size:11px;line-height:13px;white-space:nowrap;letter-spacing:-0.10px">1..990</span><span class="ann" style="left:285px;top:590px;letter-spacing:0.09px">Dados dos detalhes da NF-e</span><span class="ann" style="left:692px;top:-4px;letter-spacing:0.06px">código EAN ou código de</span><span class="ann" style="left:692px;top:7px;letter-spacing:-0.09px">barras</span><div class="hl" style="left:672px;top:39px;width:15px"></div><div class="el" style="left:686px;top:29px;width:52px;background:#a6caf0"><b style="letter-spacing:0.20px">xProd</b></div><span class="ann" style="left:692px;top:56px;letter-spacing:0.04px">Descrição do produto ou</span><span class="ann" style="left:692px;top:67px;letter-spacing:0.07px">serviço</span><div class="hl" style="left:672px;top:99px;width:15px"></div><div class="el" style="left:686px;top:89px;width:52px;background:#fff"><b style="letter-spacing:-0.09px">NCM</b></div><span class="ann" style="left:692px;top:116px;letter-spacing:0.06px">Código NCM (8 posições),</span><span class="ann" style="left:692px;top:127px;letter-spacing:0.07px">será permitida a informação</span><span class="ann" style="left:692px;top:138px;letter-spacing:0.00px">do gênero (posição do</span><span class="ann" style="left:692px;top:149px;letter-spacing:0.09px">capítulo do NCM) quando a</span><span class="ann" style="left:692px;top:160px;letter-spacing:0.05px">operação não for de</span><span class="ann" style="left:692px;top:171px;letter-spacing:-0.00px">comércio exterior</span><span class="ann" style="left:692px;top:182px;letter-spacing:0.02px">(importação/exportação) ou o</span><span class="ann" style="left:692px;top:193px;letter-spacing:0.12px">produto não seja tributado</span><span class="ann" style="left:692px;top:204px;letter-spacing:0.23px">pelo IPI. Em caso de item</span><span class="ann" style="left:692px;top:215px;letter-spacing:0.12px">de serviço ou item que não</span><span class="ann" style="left:692px;top:226px;letter-spacing:0.10px">tenham produto (Ex.</span><span class="ann" style="left:692px;top:237px;letter-spacing:0.07px">transferência de crédito,</span><span class="ann" style="left:692px;top:248px;letter-spacing:0.12px">crédito do ativo imobilizado,</span><span class="ann" style="left:692px;top:259px;letter-spacing:0.11px">etc.), informar o código 00</span><span class="ann" style="left:692px;top:270px;letter-spacing:0.10px">(zeros) (v2.0)</span><div style="left:672px;top:302px;width:15px;height:0;border-top:1px dashed #000"></div><div class="el opt" style="left:686px;top:292px;width:52px;background:#fff"><b style="letter-spacing:-0.31px">EXTIPI</b></div><span class="ann" style="left:692px;top:319px;letter-spacing:0.13px">Código EX TIPI (3 posições)</span><div class="hl" style="left:672px;top:351px;width:15px"></div><div class="el" style="left:686px;top:341px;width:52px;background:#fff"><b style="letter-spacing:-0.49px">CFOP</b></div><span class="ann" style="left:692px;top:368px;letter-spacing:0.05px">Código Fiscal de Operações</span><span class="ann" style="left:692px;top:379px;letter-spacing:-0.05px">e Prestações</span><div class="hl" style="left:672px;top:411px;width:15px"></div><div class="el" style="left:686px;top:401px;width:52px;background:#fff"><b style="letter-spacing:0.46px">uCom</b></div><span class="ann" style="left:692px;top:428px;letter-spacing:-0.01px">Unidade comercial</span><div class="hl" style="left:672px;top:460px;width:15px"></div><div class="el" style="left:686px;top:450px;width:52px;background:#fff"><b style="letter-spacing:0.46px">qCom</b></div><span class="ann" style="left:692px;top:477px;letter-spacing:0.13px">Quantidade Comercial  do</span><span class="ann" style="left:692px;top:488px;letter-spacing:0.09px">produto, alterado para</span><span class="ann" style="left:692px;top:499px;letter-spacing:0.05px">aceitar de 0 a 4 casas</span><span class="ann" style="left:692px;top:510px;letter-spacing:0.15px">decimais e 11 inteiros. (v2.0)</span><div class="hl" style="left:672px;top:542px;width:15px"></div><div class="el" style="left:686px;top:532px;width:62px;background:#fff"><b style="letter-spacing:0.13px">vUnCom</b></div><span class="ann" style="left:692px;top:559px;letter-spacing:0.16px">Valor unitário de</span><span class="ann" style="left:692px;top:570px;letter-spacing:0.00px">comercialização  - alterado</span><span class="ann" style="left:692px;top:581px;letter-spacing:0.04px">para aceitar 0 a 10 casas</span><span class="ann" style="left:692px;top:592px;letter-spacing:0.13px">decimais e 11 inteiros (v2.0)</span><div class="hl" style="left:672px;top:624px;width:15px"></div><div class="el" style="left:686px;top:614px;width:52px;background:#fff"><b style="letter-spacing:0.20px">vProd</b></div><span class="ann" style="left:692px;top:641px;letter-spacing:0.17px">Valor bruto do produto ou</span><span class="ann" style="left:692px;top:652px;letter-spacing:0.06px">serviço.</span><div class="hl" style="left:672px;top:684px;width:15px"></div><div class="el" style="left:686px;top:674px;width:64px;background:#fff"><b style="letter-spacing:0.00px">cEANTrib</b></div><div style="left:634px;top:9px;width:191px;height:79px;box-sizing:border-box;border:1px solid #c8281e"></div></div>
<div style="left:226px;top:771px;width:939px;height:16px;background:#e9e7e3"></div><div style="left:226px;top:771px;width:16px;height:16px;box-sizing:border-box;border-style:solid;border-width:1px;border-color:#fff #404040 #404040 #fff;background:#d4d0c8"><div style="left:0;top:0;right:0;bottom:0;border-style:solid;border-width:0 1px 1px 0;border-color:#808080"></div></div><svg style="left:231px;top:775px" width="5" height="8" viewBox="0 0 5 8"><path d="M4.5 0 V8 L0.5 4 Z" fill="#000"/></svg><div style="left:352px;top:771px;width:820px;height:16px;box-sizing:border-box;border-style:solid;border-width:1px;border-color:#fff #404040 #404040 #fff;background:#d4d0c8"><div style="left:0;top:0;right:0;bottom:0;border-style:solid;border-width:0 1px 1px 0;border-color:#808080"></div></div>
<span class="tab" style="left:241.5px;letter-spacing:-0.05px">Text</span><span class="tab" style="left:300.0px;letter-spacing:-0.45px">Grid</span><span class="tab" style="left:350.5px;font-weight:bold;letter-spacing:0.81px">Schema/WSDL</span><span class="tab" style="left:463.0px;letter-spacing:-0.10px">Authentic</span><span class="tab" style="left:538.0px;letter-spacing:-0.19px">Browser</span><div class="tsep" style="left:280px"></div><div class="tsep" style="left:338px"></div><div class="tsep" style="left:447px"></div><div class="tsep" style="left:523px"></div><div class="tsep" style="left:590px"></div><div style="left:344px;top:787px;width:100px;height:17px;box-sizing:border-box;border-style:solid;border-width:1px;border-color:#404040 #fff #fff #404040"><div style="left:0;top:0;right:0;bottom:0;border-style:solid;border-width:1px 0 0 1px;border-color:#808080"></div></div><div style="left:225px;top:804px;width:940px;height:1px;background:#404040"></div>
<div style="left:226px;top:805px;width:107px;height:21px;background:#fff;border-radius:0 0 4px 4px;box-shadow:1px 1px 0 #808080"></div><svg style="left:230px;top:807px" width="17" height="17" viewBox="0 0 17 17"><path d="M0.5 3.5 L3.5 0.5 H13 Q13.5 0.5 13.5 1 V15 Q13.5 15.5 13 15.5 H1 Q0.5 15.5 0.5 15 Z" fill="#fff" stroke="#1e0a1e" stroke-width="1"/><path d="M0.5 3.5 H3.5 V0.5" fill="#c8b4d2" stroke="#1e0a1e" stroke-width="0.8"/><rect x="2" y="7.5" width="14" height="6" fill="#7a1e82"/><path d="M16 7.5 V13.5 H2" fill="none" stroke="#1e0a1e"/><text x="9" y="12.6" font-family="Liberation Sans,sans-serif" font-size="6.5" font-weight="bold" fill="#fff" text-anchor="middle" textLength="11.5">XSD</text></svg><span style="left:247px;top:809px;font-weight:bold;line-height:13px;white-space:nowrap;letter-spacing:0.60px">nfe_v2.00.xsd</span>
</body>
</html>
